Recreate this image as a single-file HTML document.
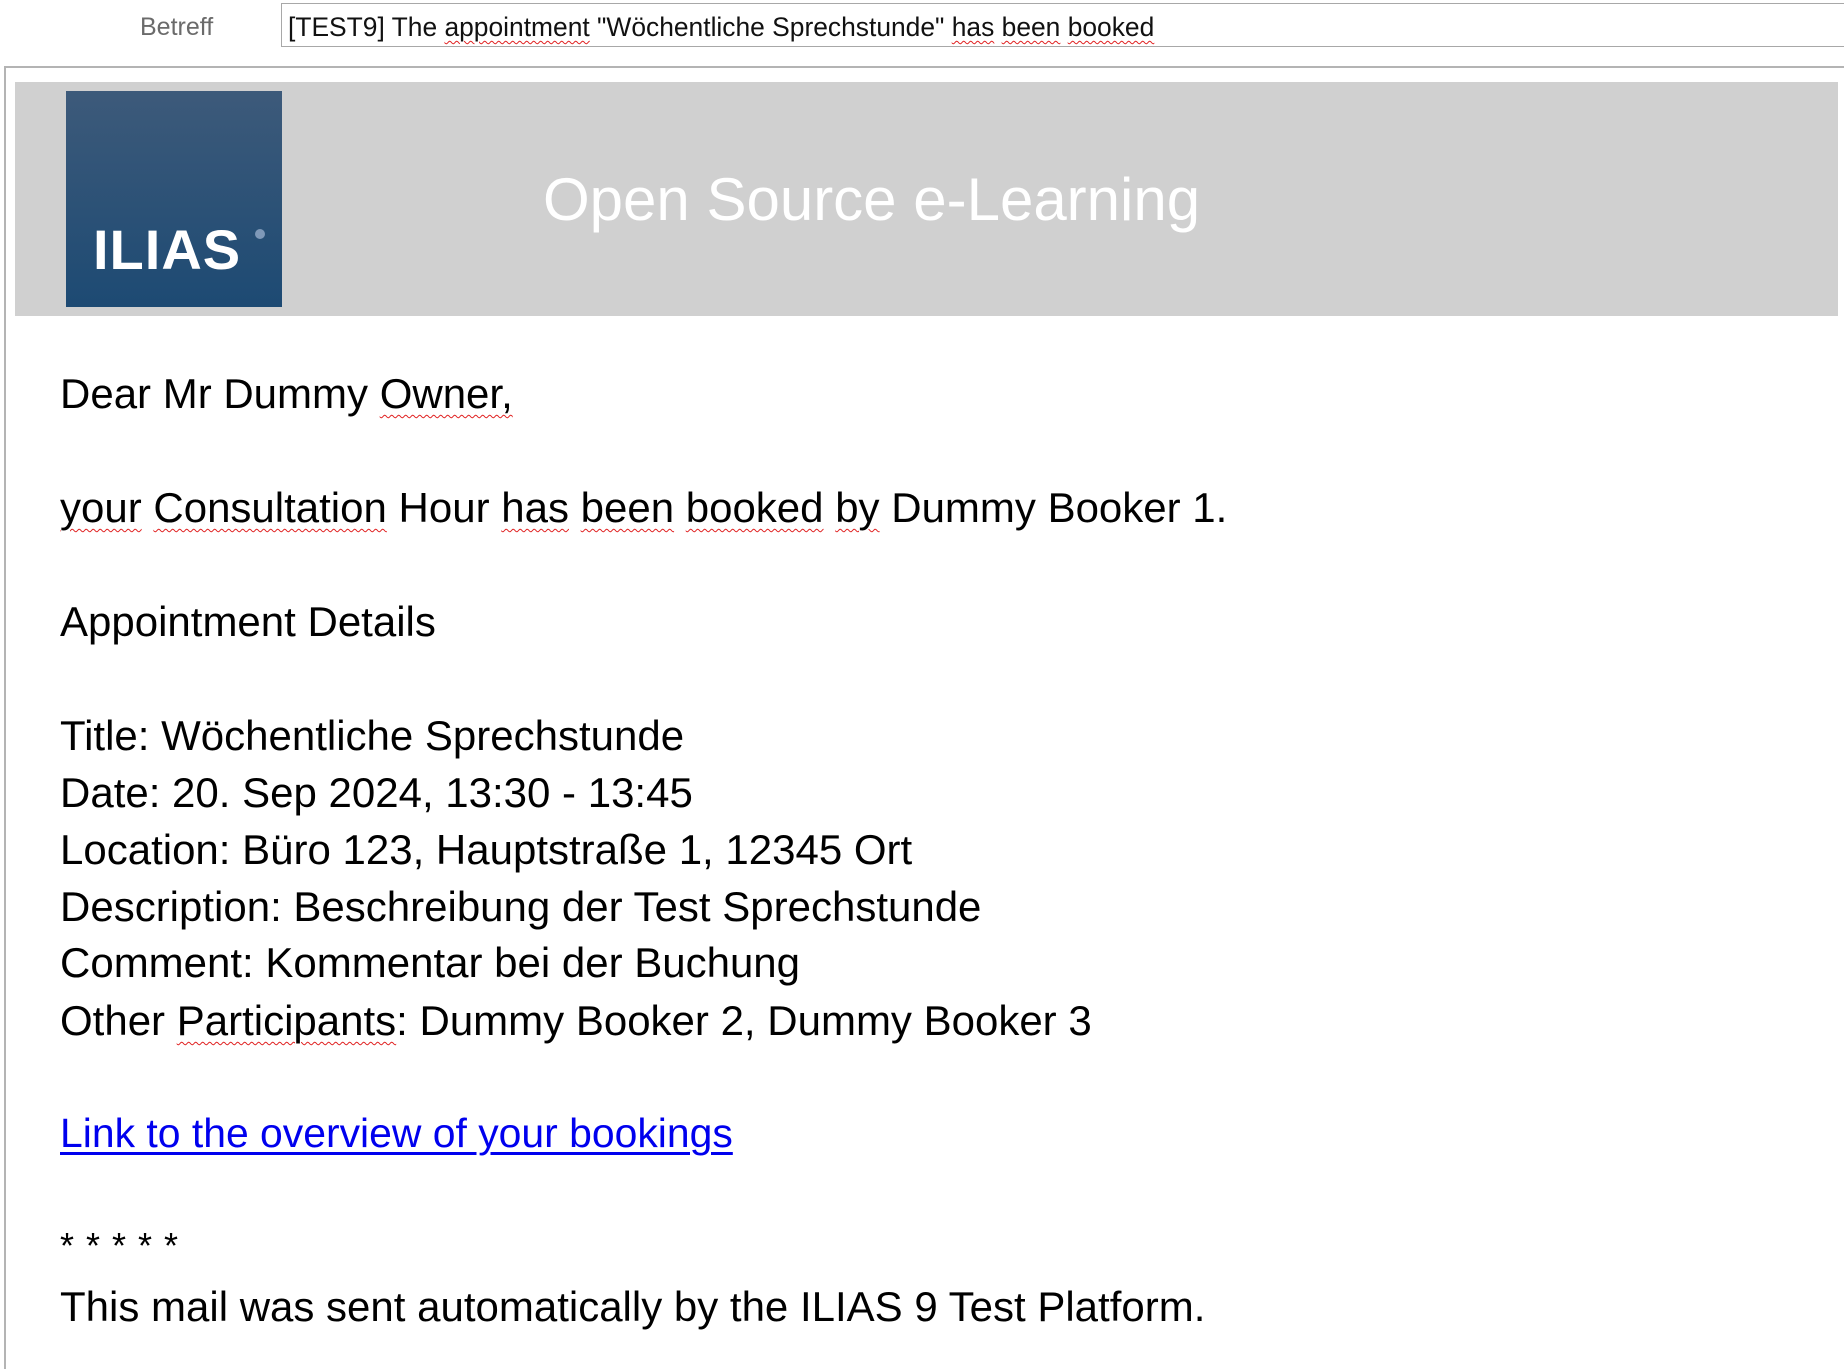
<!DOCTYPE html>
<html><head><meta charset="utf-8">
<style>
html,body{margin:0;padding:0;background:#fff;width:1844px;height:1369px;overflow:hidden;position:relative;font-family:"Liberation Sans",Arial,sans-serif;}
.abs{position:absolute;white-space:nowrap;}
.sq{text-decoration:underline wavy #e02020;text-decoration-thickness:1px;text-underline-offset:6px;}
.l{position:absolute;left:60px;font-size:42px;line-height:56px;color:#000;white-space:nowrap;}
</style></head><body>
<div class="abs" style="left:140px;top:8px;font-size:25px;line-height:38px;color:#6b6b6b;">Betreff</div>
<div class="abs" style="left:281px;top:3px;width:1570px;height:44px;border:1px solid #a8a8a8;box-sizing:border-box;"></div>
<div class="abs" style="left:288px;top:8px;font-size:26.4px;line-height:38px;color:#111;">[TEST9] The <span class="sq" style="text-underline-offset:4px">appointment</span> "Wöchentliche Sprechstunde" <span class="sq" style="text-underline-offset:4px">has</span> <span class="sq" style="text-underline-offset:4px">been</span> <span class="sq" style="text-underline-offset:4px">booked</span></div>
<div class="abs" style="left:4px;top:66px;width:1840px;height:1303px;border-top:2px solid #b4b4b4;border-left:2px solid #b4b4b4;box-sizing:border-box;"></div>
<div class="abs" style="left:15px;top:82px;width:1823px;height:234px;background:#d0d0d0;"></div>
<div class="abs" style="left:66px;top:91px;width:216px;height:216px;background:linear-gradient(#3d5a7a,#1d4a73);"></div>
<div class="abs" style="left:93px;top:220px;font-size:56px;line-height:60px;font-weight:bold;color:#fff;letter-spacing:1px;">ILIAS</div>
<div class="abs" style="left:255px;top:229px;width:10px;height:10px;border-radius:50%;background:#7f99b8;"></div>
<div class="abs" style="left:543px;top:165px;font-size:60px;line-height:70px;color:#fff;">Open Source e-Learning</div>

<div class="l" style="top:366px">Dear Mr Dummy <span class="sq">Owner,</span></div>
<div class="l" style="top:480px"><span class="sq">your</span> <span class="sq">Consultation</span> Hour <span class="sq">has</span> <span class="sq">been</span> <span class="sq">booked</span> <span class="sq">by</span> Dummy Booker 1.</div>
<div class="l" style="top:594px">Appointment Details</div>
<div class="l" style="top:708px">Title: Wöchentliche Sprechstunde</div>
<div class="l" style="top:765px">Date: 20. Sep 2024, 13:30 - 13:45</div>
<div class="l" style="top:822px">Location: Büro 123, Hauptstraße 1, 12345 Ort</div>
<div class="l" style="top:879px">Description: Beschreibung der Test Sprechstunde</div>
<div class="l" style="top:935px">Comment: Kommentar bei der Buchung</div>
<div class="l" style="top:993px">Other <span class="sq">Participants</span>: Dummy Booker 2, Dummy Booker 3</div>
<div class="l" style="top:1105px;color:#0000ee;font-size:40.9px;text-decoration:underline;text-decoration-thickness:3px;text-underline-offset:5px;">Link to the overview of your bookings</div>
<div class="l" style="top:1218px;font-size:36px;letter-spacing:1px;">* * * * *</div>
<div class="l" style="top:1279px">This mail was sent automatically by the ILIAS 9 Test Platform.</div>
</body></html>
